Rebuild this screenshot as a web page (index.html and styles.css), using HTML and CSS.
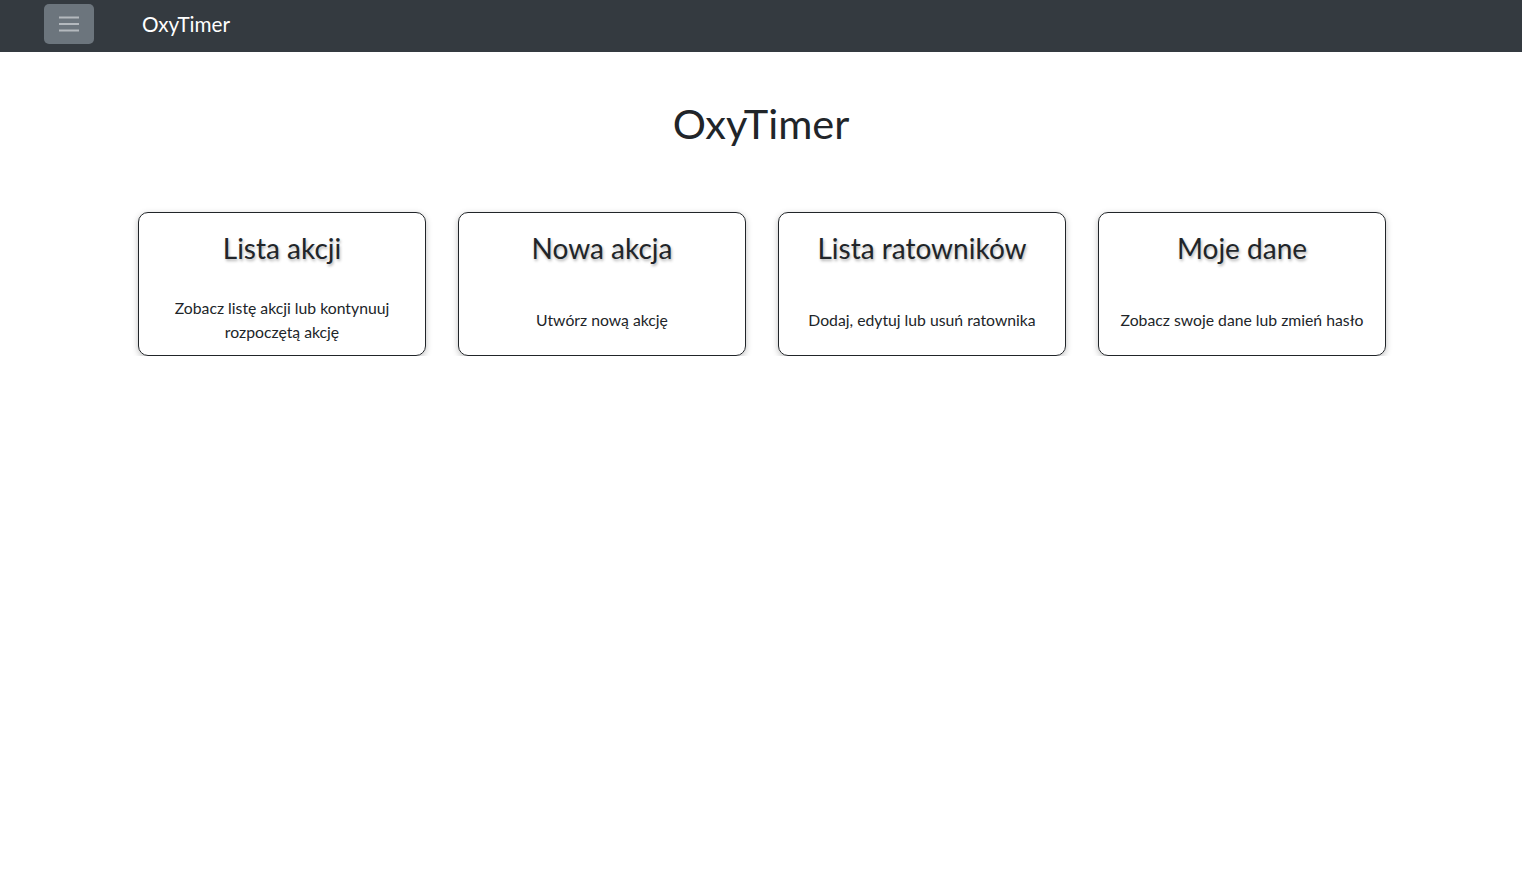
FILE: index.html
```html
<!DOCTYPE html>
<html lang="pl">
<head>
<meta charset="utf-8">
<title>OxyTimer</title>
<link rel="stylesheet" href="styles.css">
</head>
<body>
<nav class="navbar">
  <button class="toggler" aria-label="Menu">
    <svg width="20" height="16" viewBox="0 0 20 16"><path d="M0 1.5h20M0 8h20M0 14.5h20" stroke="#b4b9be" stroke-width="2"/></svg>
  </button>
  <span class="brand">OxyTimer</span>
</nav>
<main class="main">
  <h1 class="title">OxyTimer</h1>
  <div class="cards">
    <div class="card">
      <h3 class="card-title">Lista akcji</h3>
      <div class="card-desc">Zobacz listę akcji lub kontynuuj rozpoczętą akcję</div>
    </div>
    <div class="card">
      <h3 class="card-title">Nowa akcja</h3>
      <div class="card-desc">Utwórz nową akcję</div>
    </div>
    <div class="card">
      <h3 class="card-title">Lista ratowników</h3>
      <div class="card-desc">Dodaj, edytuj lub usuń ratownika</div>
    </div>
    <div class="card">
      <h3 class="card-title">Moje dane</h3>
      <div class="card-desc">Zobacz swoje dane lub zmień hasło</div>
    </div>
  </div>
</main>
</body>
</html>
```
FILE: styles.css
```css
* { box-sizing: border-box; }
html, body { margin: 0; padding: 0; }
body {
  font-family: Lato, "Noto Sans", sans-serif;
  color: #212529;
  background: #fff;
  font-size: 16px;
  line-height: 1.5;
}
.navbar {
  height: 52px;
  background: #343a40;
  display: flex;
  align-items: flex-start;
  padding: 4px 0 0 44px;
}
.toggler {
  width: 50px;
  height: 40px;
  background: #6c757d;
  border: none;
  border-radius: 5px;
  display: flex;
  align-items: center;
  justify-content: center;
  padding: 0;
  margin-right: 48px;
}
.brand {
  color: #fff;
  font-size: 20.7px;
  line-height: 40px;
}
.main {
  display: flex;
  flex-direction: column;
  align-items: center;
}
.title {
  margin: 47px 0 65px;
  font-size: 41.5px;
  font-weight: 400;
  line-height: 48px;
}
.cards {
  display: flex;
  gap: 32px;
  margin-left: 2px;
}
.card {
  width: 288px;
  height: 144px;
  border: 1px solid #212529;
  border-radius: 10px;
  box-shadow: 0 2px 6px rgba(0,0,0,0.25);
  padding: 19px 12px 0;
  display: flex;
  flex-direction: column;
  text-align: center;
}
.card-title {
  margin: 0 0 20px;
  font-size: 28px;
  font-weight: 400;
  line-height: 1.2;
  text-shadow: 1px 2px 3px rgba(0,0,0,0.3);
}
.card-desc {
  flex: 1;
  display: flex;
  align-items: center;
  justify-content: center;
  font-size: 15.75px;
  line-height: 24px;
}
```
